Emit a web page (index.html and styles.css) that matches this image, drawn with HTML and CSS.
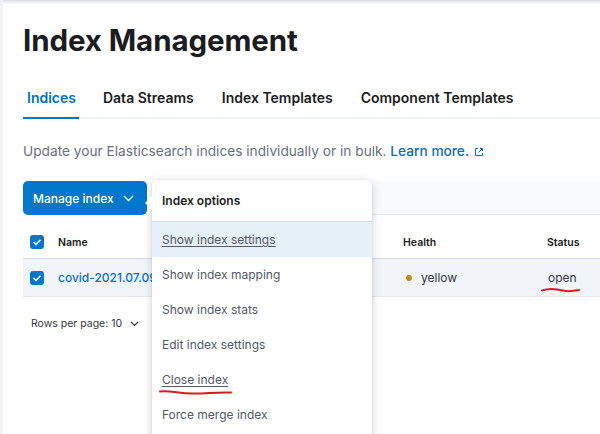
FILE: index.html
```html
<!DOCTYPE html>
<html>
<head>
<meta charset="utf-8">
<link rel="stylesheet" href="styles.css">
</head>
<body>
<main class="page">
  <h1 class="title">Index Management</h1>
  <nav class="tabs">
    <span class="tab active">Indices</span>
    <span class="tab">Data Streams</span>
    <span class="tab">Index Templates</span>
    <span class="tab">Component Templates</span>
  </nav>
  <p class="desc">Update your Elasticsearch indices individually or in bulk. <a class="learn">Learn more.</a><svg class="ext" width="10" height="10" viewBox="0 0 10 10"><path d="M4 1.5H1.5v7h7V6" fill="none" stroke="#0b6dbf" stroke-width="1"/><path d="M6 1.5h2.5V4M8.5 1.5 4.5 5.5" fill="none" stroke="#0b6dbf" stroke-width="1"/></svg></p>
  <div class="toolbar">
    <button class="manage">Manage index <svg width="11" height="7" viewBox="0 0 11 7"><path d="M1 1l4.5 4.5L10 1" fill="none" stroke="#fff" stroke-width="1.3"/></svg></button>
    <div class="search"></div>
  </div>
  <div class="table">
    <div class="row head">
      <span class="cell chk"><span class="cb"><svg width="10" height="8" viewBox="0 0 10 8"><path d="M1.5 4 4 6.3 8.5 1.7" fill="none" stroke="#fff" stroke-width="1.6"/></svg></span></span>
      <span class="cell">Name</span>
      <span class="cell">Health</span>
      <span class="cell">Status</span>
    </div>
    <div class="row body">
      <span class="cell chk"><span class="cb"><svg width="10" height="8" viewBox="0 0 10 8"><path d="M1.5 4 4 6.3 8.5 1.7" fill="none" stroke="#fff" stroke-width="1.6"/></svg></span></span>
      <span class="cell link">covid-2021.07.09</span>
      <span class="cell health"><span class="dot"></span>yellow</span>
      <span class="cell status">open</span>
    </div>
  </div>
  <div class="pager">Rows per page: 10 <svg width="9" height="6" viewBox="0 0 9 6"><path d="M1 1l3.5 3.5L8 1" fill="none" stroke="#343741" stroke-width="1.2"/></svg></div>

  <div class="popover">
    <span class="arrow"></span>
    <div class="pop-title">Index options</div>
    <ul class="menu">
      <li class="item hl"><u>Show index settings</u></li>
      <li class="item">Show index mapping</li>
      <li class="item">Show index stats</li>
      <li class="item">Edit index settings</li>
      <li class="item"><u>Close index</u></li>
      <li class="item">Force merge index</li>
    </ul>
  </div>
  <svg class="mark mark-close" width="74" height="8" viewBox="0 0 74 8"><path d="M1 3.5C14 2.5 20 6 36 5.5S60 4 72 4.5" fill="none" stroke="#e0191f" stroke-width="2" stroke-linecap="round"/></svg>
  <svg class="mark mark-open" width="40" height="8" viewBox="0 0 40 8"><path d="M1 4.5C8 2 16 3 22 4.5S33 5 38 4" fill="none" stroke="#e0191f" stroke-width="2" stroke-linecap="round"/></svg>
</main>
</body>
</html>
```
FILE: styles.css
```css
* { box-sizing: border-box; }
html, body { margin: 0; height: 100%; }
body {
  font-family: Inter, "Noto Sans", sans-serif;
  color: #343741;
  background: linear-gradient(#d9dadc 0, #eeeff0 2px, #fff 6px);
  overflow: hidden;
}
.page {
  position: relative;
  height: 100%;
  margin-top: 4px;
  margin-left: 3px;
  background: #fff;
  padding: 0 0 0 20px;
}
body::before {
  content: "";
  position: fixed;
  left: 0; top: 0; bottom: 0; width: 3px;
  background: #f2f3f4;
}
.title {
  margin: 0;
  padding-top: 18px;
  font-size: 29.5px;
  line-height: 36px;
  font-weight: 700;
  color: #1a1c21;
  letter-spacing: -0.1px;
}
.tabs {
  display: flex;
  margin-top: 30px;
  border-bottom: 2px solid #edf0f4;
}
.tab {
  font-size: 14px;
  font-weight: 600;
  color: #1a1c21;
  padding: 0 14px 9px 14px;
  line-height: 20px;
}
.tab.active {
  color: #0071c2;
  box-shadow: inset 0 -2px 0 #0077cc;
  margin-bottom: -2px;
  padding: 0 3px 11px 4px;
  margin-right: 10px;
}
.desc {
  margin: 22px 0 0 0;
  font-size: 13.7px;
  line-height: 20px;
  color: #69707d;
}
.learn { color: #0b6dbf; font-weight: 500; }
.ext { margin-left: 5px; vertical-align: -1px; }
.toolbar {
  display: flex;
  margin-top: 20px;
  height: 34px;
}
.manage {
  display: flex;
  align-items: center;
  gap: 9px;
  height: 34px;
  padding: 0 13px 0 10px;
  border: 0;
  border-radius: 5px;
  background: #0077cc;
  color: #fff;
  font-family: inherit;
  font-size: 12px;
  font-weight: 500;
}
.search {
  flex: 1;
  margin-left: 10px;
  background: #fafbfd;
  border-bottom: 1px solid #e4e8ef;
}
.table { margin-top: 11px; }
.row {
  display: grid;
  grid-template-columns: 35px 345px 144px 1fr;
  align-items: center;
}
.row.head {
  height: 33px;
  font-size: 10.5px;
  font-weight: 600;
  color: #1a1c21;
  border-bottom: 1px solid #d3dae6;
}
.row.body {
  height: 38px;
  background: #f1f5fa;
  border-bottom: 1px solid #e3e8f0;
  font-size: 12px;
}
.chk { padding-left: 7px; display: flex; }
.cb {
  width: 14px; height: 14px;
  border-radius: 3px;
  background: #0077cc;
  display: flex; align-items: center; justify-content: center;
}
.link { color: #0b6dbf; font-weight: 500; }
.health { display: flex; align-items: center; padding-left: 3px; color: #343741; }
.dot { width: 6px; height: 6px; border-radius: 50%; background: #b8901e; margin-right: 9px; }
.status { padding-left: 1px; }
.pager {
  margin-top: 19px;
  padding-left: 8px;
  font-size: 10.5px;
  line-height: 16px;
  color: #343741;
  display: flex;
  align-items: center;
  gap: 8px;
}
.popover {
  position: absolute;
  left: 149px;
  top: 176px;
  width: 220px;
  height: 300px;
  background: #fff;
  border-radius: 5px;
  box-shadow: 0 2px 10px rgba(0,0,0,0.18), 0 0 2px rgba(0,0,0,0.08);
}
.arrow {
  position: absolute;
  left: -7px; top: 16px;
  width: 0; height: 0;
  border-top: 7px solid transparent;
  border-bottom: 7px solid transparent;
  border-right: 7px solid #fff;
}
.pop-title {
  height: 42px;
  padding: 13px 10px 0 10px;
  font-size: 12px;
  font-weight: 600;
  color: #1a1c21;
  border-bottom: 1px solid #d3dae6;
}
.menu { list-style: none; margin: 0; padding: 0; }
.item {
  height: 35px;
  line-height: 35px;
  padding-left: 10px;
  font-size: 12px;
  color: #535966;
}
.item.hl { background: #e6f0f8; }
.item u { text-underline-offset: 2px; }
.mark { position: absolute; }
.mark-close { left: 156px; top: 384px; }
.mark-open { left: 538px; top: 282px; }
```
